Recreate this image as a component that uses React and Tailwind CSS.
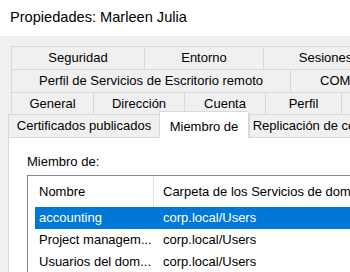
const tabRows = [
  [
    { label: "Seguridad", w: 133 },
    { label: "Entorno", w: 119 },
    { label: "Sesiones", w: 124 },
  ],
  [
    { label: "Perfil de Servicios de Escritorio remoto", w: 279 },
    { label: "COM+", w: 97 },
  ],
  [
    { label: "General", w: 82 },
    { label: "Dirección", w: 91 },
    { label: "Cuenta", w: 81 },
    { label: "Perfil", w: 76 },
    { label: "Teléfonos", w: 110 },
  ],
];

const rows = [
  { name: "accounting", path: "corp.local/Users", selected: true },
  { name: "Project managem...", path: "corp.local/Users" },
  { name: "Usuarios del dom...", path: "corp.local/Users" },
];

function Tab({ label, w, h = "h-[23px]" }) {
  return (
    <div
      className={`${h} shrink-0 flex items-center justify-center whitespace-nowrap border-l border-t border-[#d9d9d9] bg-[#f0f0f0] text-[13px] text-black`}
      style={{ width: w }}
    >
      {label}
    </div>
  );
}

export default function App() {
  return (
    <div className="w-[350px] h-[272px] overflow-hidden bg-white font-['Liberation_Sans',Arial,sans-serif] text-black">
      <div className="h-[36px] pl-[10px] pt-[7px] text-[14.6px] leading-[20px] whitespace-nowrap">
        Propiedades: Marleen Julia
      </div>
      <div className="h-[236px] bg-[#f0f0f0] pt-[10px] overflow-hidden">
        <div className="pl-[11px]">
          {tabRows.map((row, i) => (
            <div key={i} className={`flex ${i === 2 ? "h-[22px]" : "h-[23px]"}`}>
              {row.map((t) => (
                <Tab key={t.label} {...t} h={i === 2 ? "h-[22px]" : "h-[23px]"} />
              ))}
            </div>
          ))}
        </div>
        <div className="relative flex h-[23px] pl-[8px]">
          <Tab label="Certificados publicados" w={151} />
          <div className="relative z-10 -mt-[3px] h-[27px] w-[90px] shrink-0 flex items-start justify-center pt-[5px] whitespace-nowrap bg-white border-l border-t border-r border-[#d9d9d9] text-[13px]">
            Miembro de
          </div>
          <Tab label="Replicación de contraseñas" w={166} />
        </div>
        <div className="ml-[8px] h-[140px] bg-white border-l border-t border-[#d9d9d9] pl-[18px] pt-[15px]">
          <div className="text-[13px] leading-[18px]">Miembro de:</div>
          <div className="mt-[4px] h-[120px] border-l border-t border-[#828790] bg-white text-[13px] whitespace-nowrap">
            <div className="flex h-[31px] items-center">
              <div className="w-[126px] shrink-0 h-full flex items-center pl-[11px] border-r border-[#e5e5e5]">Nombre</div>
              <div className="pl-[9px]">Carpeta de los Servicios de dominio</div>
            </div>
            <div className="pl-[7px]">
              {rows.map((r) => (
                <div
                  key={r.name}
                  className={`flex h-[22px] items-center ${r.selected ? "bg-[#0078d7] text-white" : ""}`}
                >
                  <div className="w-[119px] shrink-0 pl-[4px]">{r.name}</div>
                  <div className="pl-[9px]">{r.path}</div>
                </div>
              ))}
            </div>
          </div>
        </div>
      </div>
    </div>
  );
}
